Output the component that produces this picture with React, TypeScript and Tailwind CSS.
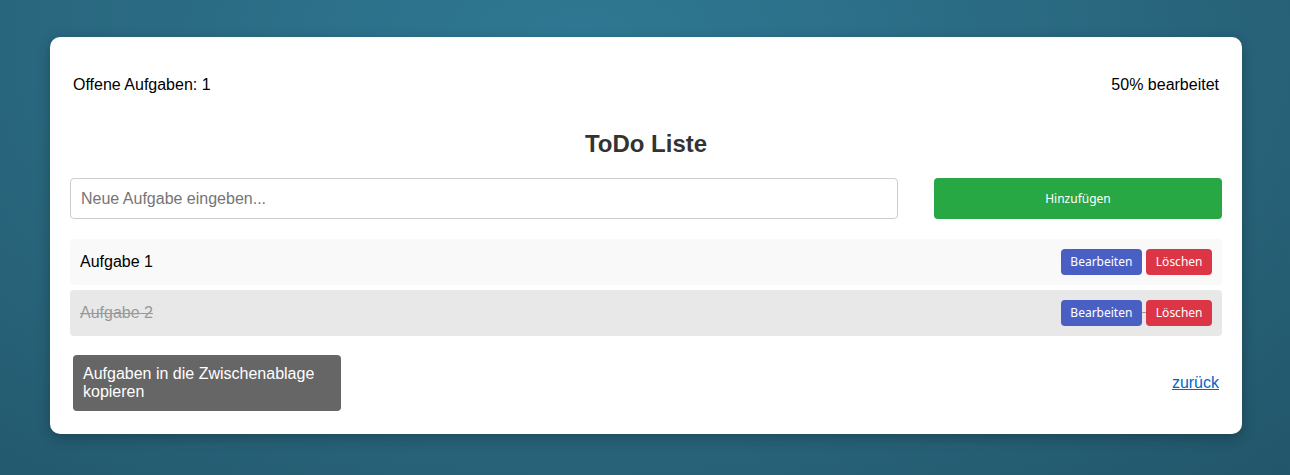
import React from "react";

const btnFont = { fontFamily: '"Noto Sans", "Open Sans", sans-serif' };

function Row({ text, done }: { text: string; done?: boolean }) {
  return (
    <li
      className={`flex items-center justify-between rounded-[4px] h-[46px] pl-[10px] pr-[10px] ${
        done ? "bg-[#e8e8e8] text-[#999999] line-through" : "bg-[#f9f9f9] text-black"
      } text-[16px]`}
    >
      <span>{text}</span>
      <span className="whitespace-pre">
        <button
          style={btnFont}
          className="inline-block h-[26px] px-[9.5px] rounded-[4px] bg-[#4a5fc4] text-white text-[12px] leading-[16px] no-underline align-middle"
        >
          Bearbeiten
        </button>
        {" "}
        <button
          style={btnFont}
          className="inline-block h-[26px] px-[9.5px] rounded-[4px] bg-[#dc3545] text-white text-[12px] leading-[16px] no-underline align-middle"
        >
          Löschen
        </button>
      </span>
    </li>
  );
}

export default function App() {
  return (
    <div
      className="w-full h-screen min-h-[475px] bg-[radial-gradient(ellipse_at_45%_10%,#2f7893_0%,#29677e_55%,#22566a_100%)] pt-[37px] pl-[50px]"
      style={{ fontFamily: '"Liberation Sans", Arial, sans-serif' }}
    >
      <div className="w-[1192px] bg-white rounded-[10px] shadow-[0_4px_14px_rgba(0,0,0,0.25)] h-[397px] px-[20px] pt-[20px] pb-[23px] flex flex-col">
        <div className="flex justify-between px-[3px] pt-[19px] text-[16px] leading-[18px] text-black">
          <span>Offene Aufgaben: 1</span>
          <span>50% bearbeitet</span>
        </div>
        <h2 className="mt-[36px] text-center text-[24px] leading-[28px] font-bold text-[#333333]">
          ToDo Liste
        </h2>
        <div className="mt-[20px] flex gap-[36px]">
          <input
            placeholder="Neue Aufgabe eingeben..."
            className="w-[828px] h-[41px] border border-[#cccccc] rounded-[4px] px-[10px] text-[16px] placeholder:text-[#757575] outline-none"
          />
          <button
            style={btnFont}
            className="flex-1 h-[41px] rounded-[4px] bg-[#28a745] text-white text-[12px]"
          >
            Hinzufügen
          </button>
        </div>
        <ul className="mt-[20px] flex flex-col gap-[5px]">
          <Row text="Aufgabe 1" />
          <Row text="Aufgabe 2" done />
        </ul>
        <div className="mt-[19px] flex items-center justify-between px-[3px]">
          <button className="w-[268px] h-[56px] rounded-[4px] bg-[#666666] text-white text-[16px] leading-[18px] text-left px-[10px]">
            Aufgaben in die Zwischenablage kopieren
          </button>
          <a href="#" className="text-[16px] text-[#0066cc] underline">
            zurück
          </a>
        </div>
      </div>
    </div>
  );
}
